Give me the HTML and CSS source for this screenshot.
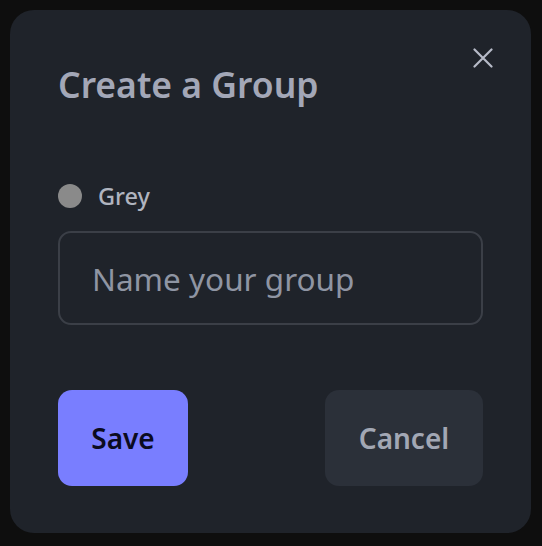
FILE: index.html
```html
<!DOCTYPE html>
<html lang="en">
<head>
<meta charset="utf-8">
<title>Create a Group</title>
<link rel="stylesheet" href="styles.css">
</head>
<body>
  <div class="modal" role="dialog" aria-labelledby="title">
    <button class="close" aria-label="Close">
      <svg width="20" height="20" viewBox="0 0 20 20" fill="none" stroke="currentColor" stroke-width="2.2" stroke-linecap="round">
        <path d="M1.5 1.5 L18.5 18.5 M18.5 1.5 L1.5 18.5"/>
      </svg>
    </button>
    <h1 id="title" class="title">Create a Group</h1>
    <div class="color-row">
      <span class="swatch"></span>
      <span class="color-name">Grey</span>
    </div>
    <input class="name-input" type="text" placeholder="Name your group">
    <div class="actions">
      <button class="btn btn-save">Save</button>
      <button class="btn btn-cancel">Cancel</button>
    </div>
  </div>
</body>
</html>
```

FILE: styles.css
```css
* { box-sizing: border-box; }

html, body {
  margin: 0;
  background: #0e0e0e;
}

body {
  padding: 10px;
  font-family: "Noto Sans", "Open Sans", sans-serif;
}

.modal {
  position: relative;
  width: 521px;
  height: 523px;
  background: #1f232a;
  border-radius: 24px;
  padding: 54px 48px 47px;
  display: flex;
  flex-direction: column;
}

.close {
  position: absolute;
  left: 463px;
  top: 38px;
  width: 20px;
  height: 20px;
  padding: 0;
  border: 0;
  background: none;
  color: #b7bbc8;
  display: block;
}

.close svg { display: block; }

.title {
  margin: 0;
  font-size: 35.5px;
  line-height: 40px;
  font-weight: 600;
  color: #a3a7b7;
}

.color-row {
  margin-top: 80px;
  display: flex;
  align-items: center;
  gap: 16px;
  height: 24px;
}

.swatch {
  width: 24px;
  height: 24px;
  border-radius: 50%;
  background: #8a8a8a;
}

.color-name {
  font-size: 23.5px;
  line-height: 24px;
  font-weight: 500;
  color: #b0b4bf;
}

.name-input {
  margin-top: 23px;
  height: 94px;
  width: 100%;
  border: 2px solid #3b3f47;
  border-radius: 13px;
  background: transparent;
  padding: 0 32px;
  font-family: inherit;
  font-size: 31.5px;
  color: #c8ccd6;
  outline: none;
}

.name-input::placeholder {
  color: #8f95a3;
}

.actions {
  margin-top: 65px;
  display: flex;
  justify-content: space-between;
}

.btn {
  height: 96px;
  border: 0;
  border-radius: 14px;
  padding: 0;
  font-family: inherit;
  font-size: 28px;
  font-weight: 600;
  display: flex;
  align-items: center;
  justify-content: center;
}

.btn-save {
  width: 130px;
  background: #797eff;
  color: #0b0b1f;
}

.btn-cancel {
  width: 158px;
  background: #2b3039;
  color: #a2a7b4;
}
```
